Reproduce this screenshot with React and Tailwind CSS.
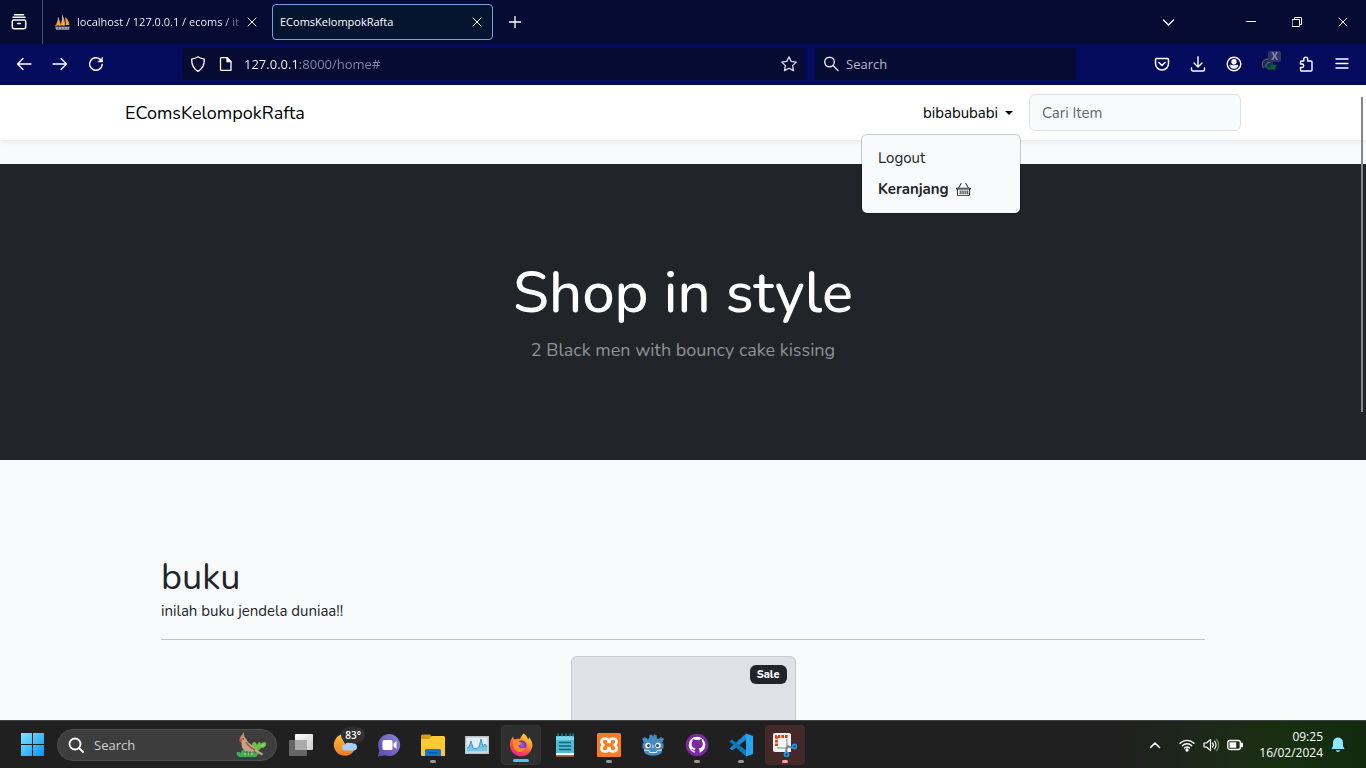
import React from "react";

const UI = "font-['Open_Sans','Noto_Sans',sans-serif]";
const S = { fill: "none", stroke: "currentColor", strokeLinecap: "round", strokeLinejoin: "round" };

function Icon({ size = 16, children, vb = "0 0 16 16", w = 1.3 }) {
  return (
    <svg width={size} height={size} viewBox={vb} {...S} strokeWidth={w} aria-hidden="true" className="shrink-0">
      {children}
    </svg>
  );
}

const Close = ({ size = 10 }) => (
  <Icon size={size} vb="0 0 10 10" w={1}>
    <path d="M1 1l8 8M9 1l-8 8" />
  </Icon>
);

function ToolButton({ label, children }) {
  return (
    <button aria-label={label} className="flex h-8 w-9 shrink-0 items-center justify-center">
      {children}
    </button>
  );
}

function TabBar() {
  return (
    <div className="flex h-11 shrink-0 items-center bg-[#060b33]">
      <button aria-label="View recent browsing" className="flex h-11 w-[43px] shrink-0 items-center justify-center border-r border-[#4b4e6c] pr-1">
        <Icon size={18} vb="0 0 18 18" w={1.5}>
          <path d="M4.500 1.800h9M3 4.300h12M3.800 7h10.400a1.500 1.500 0 0 1 1.500 1.500v5.200a2 2 0 0 1-2 2H4.300a2 2 0 0 1-2-2V8.500A1.500 1.500 0 0 1 3.800 7zM7.500 10.500h3" />
        </Icon>
      </button>
      <div className="ml-[3px] flex h-9 w-[223px] shrink-0 items-center pl-2 pr-3">
        <svg width="17" height="17" viewBox="0 0 17 17" className="shrink-0" aria-hidden="true">
          <path d="M1 12C3 9 4 6 4 3l3 8zM6 11.500C8 8 8.300 4 8 1c2 3 3.500 7 3 10.500zM11.500 11c.6-3 .3-5-.3-8 2.500 2 4.300 5 4.300 8z" fill="#f29222" />
          <path d="M4.300 3.500L5.500 12M8.500 1.500l1 10M11.700 4l1.300 7" stroke="#c9cbd8" strokeWidth=".7" />
          <path d="M1 12.500h15l-.8 3.500H2z" fill="#77798c" />
          <path d="M2 14h13" stroke="#c2c3cc" strokeWidth="1" strokeDasharray="2 1" />
        </svg>
        <span className="ml-1.5 flex-1 overflow-hidden whitespace-nowrap bg-linear-to-r from-white from-85% to-transparent bg-clip-text text-[11px] leading-5 text-transparent">
          localhost / 127.0.0.1 / ecoms / it
        </span>
        <button aria-label="Close localhost tab" className="text-white"><Close /></button>
      </div>
      <div className="ml-[3px] flex h-9 w-[221px] shrink-0 items-center rounded border border-[#7d9fe0] bg-[#06152f] pl-[7px] pr-2.5 text-[11px] leading-5 text-white">
        <span className="flex-1">EComsKelompokRafta</span>
        <button aria-label="Close EComsKelompokRafta tab"><Close /></button>
      </div>
      <button aria-label="New tab" className="flex h-9 w-11 items-center justify-center">
        <Icon size={12} vb="0 0 12 12"><path d="M6 .5v11M.5 6h11" /></Icon>
      </button>
      <div className="flex-1" />
      <button aria-label="List all tabs" className="flex h-9 w-9 items-center justify-center">
        <Icon size={13} vb="0 0 13 13"><path d="M1.500 4l5 5 5-5" /></Icon>
      </button>
      <div className="ml-[42px] flex">
        <button aria-label="Minimize" className="flex h-11 w-[46px] items-center justify-center">
          <Icon size={10} vb="0 0 10 10" w={1}><path d="M0 4.500h10" /></Icon>
        </button>
        <button aria-label="Restore" className="flex h-11 w-[46px] items-center justify-center">
          <Icon size={10} vb="0 0 10 10" w={1}><path d="M.5 2.500h7v7h-7zM2.500 2.500v-2h7v7h-2" strokeLinejoin="miter" /></Icon>
        </button>
        <button aria-label="Close window" className="flex h-11 w-[46px] items-center justify-center"><Close /></button>
      </div>
    </div>
  );
}

function Toolbar() {
  return (
    <div className="flex h-[41px] shrink-0 items-center border-b border-[#020738] bg-[#040a5c] pl-1.5 pr-1.5">
      <ToolButton label="Back"><Icon><path d="M15 8H1.500M7 2.500L1.500 8 7 13.500" /></Icon></ToolButton>
      <ToolButton label="Forward"><Icon><path d="M1 8h13.500M9 2.500L14.500 8 9 13.500" /></Icon></ToolButton>
      <ToolButton label="Reload">
        <Icon w={1.5}><path d="M14.200 8.500a6.300 6.300 0 1 1-2-5.100L14 5" /><path d="M14.500 1.500V6H10z" fill="currentColor" strokeWidth=".5" /></Icon>
      </ToolButton>
      <div className="w-[68px] shrink-0" />
      <div className="flex h-8 flex-1 items-center rounded bg-[#060b33] px-2">
        <Icon><path d="M8 .8c2 1.400 4 2 6.300 2.300C14.500 9 12.500 13 8 15.300 3.500 13 1.500 9 1.700 3.100 4 2.800 6 2.200 8 .8z" /></Icon>
        <span className="ml-3 flex"><Icon><path d="M3.500 1.700h5.500l4 4v8.600H3.500a1 1 0 0 1-1-1V2.700a1 1 0 0 1 1-1z" /><path d="M9 1.700v4h4z" fill="currentColor" /></Icon></span>
        <input
          aria-label="Address"
          defaultValue="127.0.0.1:8000/home#"
          className="ml-2.5 min-w-0 flex-1 bg-linear-to-r from-white from-[56px] to-[#858aa5] to-[56px] bg-clip-text text-[13px] leading-6 text-transparent outline-none"
        />
        <button aria-label="Bookmark this page" className="text-[#d8d9e2]">
          <Icon><path d="M8 .9l2.200 4.500 5 .7-3.600 3.500.9 5L8 12.200l-4.500 2.400.9-5L.8 6.100l5-.7z" /></Icon>
        </button>
      </div>
      <div className="ml-2.5 flex h-8 w-[261px] items-center rounded bg-[#060b33] px-2">
        <span className="flex text-[#e2e3ea]"><Icon w={1.400}><circle cx="6.500" cy="6" r="4.800" /><path d="M10 9.500L15 14.500" /></Icon></span>
        <input aria-label="Search the web" placeholder="Search" className="ml-[7px] min-w-0 flex-1 bg-transparent text-[13px] leading-6 text-white outline-none placeholder:text-[#b6b8c6]" />
      </div>
      <div className="w-[68px] shrink-0" />
      <ToolButton label="Save to Pocket"><Icon w={1.500}><path d="M2.700 2.500h10.600a1.200 1.200 0 0 1 1.200 1.200V7.500a6.500 6.500 0 0 1-13 0V3.700a1.200 1.200 0 0 1 1.200-1.200zM5 6.500l3 3 3-3" /></Icon></ToolButton>
      <ToolButton label="Downloads"><Icon w={1.400}><path d="M8 .8V10.500M4 7l4 4 4-4M1.500 12v1.500a1.500 1.500 0 0 0 1.500 1.500h10a1.500 1.500 0 0 0 1.500-1.500V12" /></Icon></ToolButton>
      <ToolButton label="Account">
        <Icon w={1.400}><circle cx="8" cy="8" r="6.800" /><circle cx="8" cy="5.800" r="2" fill="currentColor" /><path d="M4 9.200h8c0 2-1.500 3.300-4 3.300S4 11.200 4 9.200z" fill="currentColor" strokeWidth=".5" /></Icon>
      </ToolButton>
      <button aria-label="Download manager extension" className="relative flex h-8 w-9 shrink-0 items-center justify-center">
        <svg width="18" height="18" viewBox="0 0 18 18" fill="none" aria-hidden="true">
          <circle cx="7.500" cy="9.500" r="5" fill="#0d2f6c" />
          <path d="M10 5.500A5 5 0 0 0 3 13" stroke="#6a4a48" strokeWidth="1.600" />
          <path d="M9.500 7.300A4 4 0 0 0 5 12" stroke="#5f6638" strokeWidth="1.300" />
          <path d="M5 11.500c1.500 1 3.500 1 5.500-.5L9 9.500l7 .5-3 6-1-2c-2.500 1.500-6 1-7-2.500z" fill="#07602a" />
        </svg>
        <span className="absolute right-[7px] top-[3px] flex h-[11px] w-[13px] items-center justify-center rounded-xs bg-[#2f3364] text-[10px] font-bold text-[#8488b2]">X</span>
      </button>
      <ToolButton label="Extensions">
        <Icon w={1.400}><path d="M5.800 5V3a1.900 1.900 0 0 1 3.800 0v2H13a1 1 0 0 1 1 1v8a1 1 0 0 1-1 1H3.500a1 1 0 0 1-1-1v-2.500H4a1.700 1.700 0 0 0 0-3.500H2.500V6a1 1 0 0 1 1-1z" /></Icon>
      </ToolButton>
      <ToolButton label="Application menu"><Icon w={1.400}><path d="M2 3h12M2 7.500h12M2 12h12" /></Icon></ToolButton>
    </div>
  );
}

function Basket() {
  return (
    <svg width="15" height="15" viewBox="0 0 16 16" fill="currentColor" aria-hidden="true">
      <path d="M5.757 1.071a.5.5 0 0 1 .172.686L3.383 6h9.234L10.070 1.757a.5.5 0 1 1 .858-.514L13.783 6H15.500a.5.5 0 0 1 .5.5v1a.5.5 0 0 1-.5.5H15v5a2 2 0 0 1-2 2H3a2 2 0 0 1-2-2V8H.5a.5.5 0 0 1-.5-.5v-1A.5.5 0 0 1 .5 6h1.717L5.070 1.243a.5.5 0 0 1 .686-.172zM2 8v5a1 1 0 0 0 1 1h10a1 1 0 0 0 1-1V8zM1 7v.2h14V7zM4 9h1v4H4zm2 0h1v4H6zm2 0h1v4H8zm2 0h1v4h-1zm2 0h1v4h-1z" />
    </svg>
  );
}

function Navbar() {
  return (
    <nav className="relative z-10 bg-white shadow-[0_2px_4px_rgba(0,0,0,0.075)]">
      <div className="mx-auto flex h-[55px] max-w-[1140px] items-center px-3">
        <a href="#home" className="text-lg text-black">EComsKelompokRafta</a>
        <div className="relative ml-auto">
          <button aria-expanded="true" className="flex items-center gap-[7px] px-2 py-2 text-[15px] leading-6 text-black">
            bibabubabi
            <svg width="8" height="4" viewBox="0 0 8 4" aria-hidden="true"><path d="M0 0h8L4 4z" /></svg>
          </button>
          <div className="absolute right-0 top-full mt-px w-40 rounded-md border border-black/20 bg-[#f8fafc] bg-clip-padding py-2 text-[15px] leading-[23px] text-[#212529]">
            <a href="#logout" className="block px-4 py-1">Logout</a>
            <a href="#keranjang" className="flex items-center gap-[7px] px-4 py-1 font-bold">Keranjang <Basket /></a>
          </div>
        </div>
        <input aria-label="Cari Item" placeholder="Cari Item" className="ml-2 h-[37px] w-[212px] rounded-md border border-[#dee2e6] bg-[#f8fafc] px-3 text-[15px] outline-none placeholder:text-[#63686d]" />
      </div>
    </nav>
  );
}

function Page() {
  return (
    <main className="relative min-h-0 flex-1 overflow-hidden bg-[#f8fafc] font-['Nunito','Open_Sans',sans-serif] text-[#212529]">
      <Navbar />
      <header className="mt-6 flex h-[296px] flex-col items-center justify-center bg-[#212529] text-center">
        <h1 className="text-[58px] leading-[66px] font-medium text-white">Shop in style</h1>
        <p className="mt-2.5 text-lg leading-7 text-[#909294]">2 Black men with bouncy cake kissing</p>
      </header>
      <section className="mx-auto max-w-[1092px] px-6 pt-24">
        <h2 className="text-4xl leading-11">buku</h2>
        <p className="text-[15px] leading-[22px]">inilah buku jendela duniaa!!</p>
        <hr className="mt-[17px] border-[#bfc2c5]" />
        <article className="mx-auto mt-4 flex h-80 w-[225px] items-start justify-end rounded-md border border-[#c6c9cd] bg-[#dee2e6] p-2">
          <span className="rounded-md bg-[#212529] px-[7px] text-[11px] leading-[19px] font-extrabold text-white">Sale</span>
        </article>
      </section>
      <div className="absolute right-[3px] top-3 z-20 h-[315px] w-0.5 bg-[#85878a]" />
    </main>
  );
}

const art = {
  taskview: (
    <>
      <defs><linearGradient id="tv" x2="1" y2="1"><stop stopColor="#fff" /><stop offset="1" stopColor="#ccc" /></linearGradient></defs>
      <rect x="6" y="1" width="18" height="16" rx="1" fill="url(#tv)" />
      <rect x="0" y="7" width="18" height="16" rx="1" fill="#707070" fillOpacity=".88" />
      <path d="M6 7h12v10H6z" fill="#aaa" />
    </>
  ),
  weather: (
    <>
      <defs><linearGradient id="moon" x2="0" y2="1"><stop stopColor="#ffc044" /><stop offset="1" stopColor="#ee7a1f" /></linearGradient></defs>
      <path d="M10 1C9 9 13 15 22 16A11 11 0 1 1 10 1z" fill="url(#moon)" />
      <path d="M12 17.500a3 3 0 0 1 0-6 5 5 0 0 1 8-1 3.500 3.500 0 0 1 1 7z" fill="#a9cdf5" />
    </>
  ),
  chat: (
    <>
      <defs><linearGradient id="ch" x1="1" x2="0" y2="1"><stop stopColor="#6e96d7" /><stop offset=".45" stopColor="#8062c3" /><stop offset="1" stopColor="#524fb9" /></linearGradient></defs>
      <path d="M12 1a11 11 0 1 1-4 21.200L1 23.500 2.400 17A11 11 0 0 1 12 1z" fill="url(#ch)" />
      <rect x="5.500" y="7" width="10" height="10" rx="1.500" fill="#fff" /><path d="M16.500 10.500L19.500 8v8l-3-2.500z" fill="#fff" />
    </>
  ),
  folder: (
    <>
      <path d="M0 3a1.500 1.500 0 0 1 1.500-1.500H9L12 5v5H0z" fill="#d99b12" />
      <path d="M0 6h8l3-3h11.500A1.500 1.500 0 0 1 24 4.500V23H1a1 1 0 0 1-1-1z" fill="#ffc933" />
      <path d="M4 23v-5.500A1.500 1.500 0 0 1 5.500 16h13a1.500 1.500 0 0 1 1.500 1.500V23z" fill="#0878cf" /><path d="M8 19h8v1.500H8z" fill="#0754a0" />
    </>
  ),
  monitor: (
    <>
      <path d="M0 3h24v18H0z" fill="#b8c1c9" /><path d="M1.500 4.500h21v15h-21z" fill="#e3edf5" />
      <path d="M2 15l2-1 2-6 2 7 3 1 3-2 2-8 2 8 2-3 2 3v4.500H2z" fill="#76c7ed" />
      <path d="M2 15l2-1 2-6 2 7 3 1 3-2 2-8 2 8 2-3 2 3" stroke="#3999d0" fill="none" />
    </>
  ),
  firefox: (
    <>
      <defs>
        <linearGradient id="ff" x1=".8" x2=".2" y2="1"><stop stopColor="#fff13d" /><stop offset=".35" stopColor="#ff9526" /><stop offset=".7" stopColor="#ff4058" /><stop offset="1" stopColor="#e7208f" /></linearGradient>
        <radialGradient id="fp"><stop stopColor="#9a59ff" /><stop offset="1" stopColor="#6b2fbd" /></radialGradient>
      </defs>
      <path d="M14.500.5c3 2 4 4 4.500 6 1-.5 1-1.500 1-2.500 3 4 4 7.500 3 11A11.300 11.300 0 0 1 .8 12C.8 9 2 6 4 3.500L5 6.500c2-.8 4-1 6-.5 1-2 2-4 3.500-5.500z" fill="url(#ff)" />
      <circle cx="12.500" cy="12.500" r="5" fill="url(#fp)" />
      <path d="M4 8c2-1.500 5-1.500 6.500 1L13 10c-.5 1.500-3 1.500-3.500 2.500 0 3 4 4 7 1.500-1 5-6 6-9 4-3-1.500-4-6-3.500-10z" fill="#ff8b29" />
    </>
  ),
  notepad: (
    <>
      <path d="M3 3h18v18H3z" fill="#51bcd3" /><path d="M3 3h18v4H3z" fill="#78d9e8" />
      <path d="M3 20h18v2H3z" fill="#fff" /><path d="M3 22h18v1.800H3z" fill="#aa682d" />
      <path d="M6 9.500h12M6 13h12M6 16.500h12" stroke="#13627a" strokeWidth="1.300" />
      <path d="M5 .5v3M9 .5v3M13 .5v3M17 .5v3M20 .5v3" stroke="#15829c" strokeWidth="1.500" />
    </>
  ),
  xampp: (
    <>
      <rect width="24" height="24" rx="1.500" fill="#fb7a24" />
      <path d="M8.300 5.500C5.500 5.500 4.500 6.800 4.500 8.500S5.500 12 7.500 12c-2 0-3 1.500-3 3.500s1 3 3.800 3 3.200-1.500 3.200-3.500h1c0 2 .4 3.500 3.200 3.500s3.800-1 3.800-3-1-3.500-3-3.500c2 0 3-1.800 3-3.500s-1-3-3.800-3-3.200 1.500-3.200 3.500h-1c0-2-.4-3.500-3.200-3.500z" fill="none" stroke="#fff" strokeWidth="2.600" />
    </>
  ),
  godot: (
    <>
      <path d="M3 10L1 6l3-2 2.500 2L8 5.500 8.500 2 11 1.500 12 4l1-2.500 2.500.5.500 3.500 1.500.5L20 4l3 2-2 4 1.500.5V15L21 16v3c-3 5-15 5-18 0v-3l-1.500-1v-4.500z" fill="#478cbf" />
      <circle cx="7" cy="12.500" r="2.700" fill="#fff" /><circle cx="17" cy="12.500" r="2.700" fill="#fff" />
      <circle cx="7.500" cy="12.500" r="1.500" fill="#414042" /><circle cx="16.500" cy="12.500" r="1.500" fill="#414042" />
      <path d="M12 12v3M3 17l5 .5.500 2h7l.5-2 5-.5" stroke="#dceefa" strokeWidth="1" fill="none" />
    </>
  ),
  github: (
    <>
      <circle cx="12" cy="12" r="11.300" fill="#7b2aa0" />
      <circle cx="12" cy="12" r="8.300" fill="#fff" />
      <path d="M9.800 20.500v-2.800c-2.300.4-3-.8-3.600-1.900 1.300 0 1.800 1.500 3.700 1 .1-.8.400-1.200.7-1.400-2.600-.4-4-1.500-4-4.600 0-1.100.3-1.800.9-2.500-.2-.9-.1-1.600.2-2.300.9 0 1.700.5 2.400 1a9 9 0 0 1 4.200 0c.7-.5 1.500-1 2.400-1 .3.7.4 1.400.2 2.300.6.700.9 1.400.9 2.500 0 3.100-1.400 4.200-4 4.600.4.400.7 1 .7 2v3.100z" fill="#7b2aa0" />
    </>
  ),
  vscode: (
    <>
      <path d="M17 0L3 15l-3-2.500V10l2-1.500L17 20z" fill="#202020" opacity="0" />
      <path d="M17 .5L.5 15.500l2.500 2L18 6z" fill="#1588d2" />
      <path d="M17 23.500L.5 8.500l2.500-2L18 18z" fill="#0878bf" />
      <path d="M17 .5L24 3v18l-7 2.500z" fill="#27a5f2" />
    </>
  ),
  snip: (
    <>
      <path d="M0 2a2 2 0 0 1 2-2h14a2 2 0 0 1 2 2v17H2a2 2 0 0 1-2-2z" fill="#f4f4f4" />
      <path d="M3.500 13V3.500H15" fill="none" stroke="#dc3f12" strokeWidth="3" strokeDasharray="2.600 1" />
      <path d="M14 6v9L4 15" fill="none" stroke="#b5bdc4" strokeWidth="2" /><path d="M14 13l6 2M14 14l-1 5" stroke="#75818a" strokeWidth="2" />
      <circle cx="21.500" cy="13.500" r="2" fill="none" stroke="#159be5" strokeWidth="1.800" /><circle cx="13.500" cy="21.500" r="2" fill="none" stroke="#159be5" strokeWidth="1.800" />
    </>
  ),
};

const apps = [
  { id: "taskview", label: "Task view" },
  { id: "weather", label: "Widgets", badge: "83°" },
  { id: "chat", label: "Chat" },
  { id: "folder", label: "File Explorer", dot: "w-1.5 bg-[#999]" },
  { id: "monitor", label: "Resource Monitor" },
  { id: "firefox", label: "Firefox", box: "bg-[#2f2f2f] border border-[#363636]", dot: "w-4 bg-[#4cc2ff]" },
  { id: "notepad", label: "Notepad" },
  { id: "xampp", label: "XAMPP", dot: "w-1.5 bg-[#999]" },
  { id: "godot", label: "Godot" },
  { id: "github", label: "GitHub Desktop", dot: "w-1.5 bg-[#999]" },
  { id: "vscode", label: "Visual Studio Code", dot: "w-1.5 bg-[#999]" },
  { id: "snip", label: "Snipping Tool", box: "bg-[#472829]", dot: "w-1.5 bg-[#ff99a4]" },
];

function Bird() {
  return (
    <svg width="32" height="26" viewBox="6 4 32 26" aria-hidden="true">
      <path d="M22 17c0-3 3-4 4-2l1 2c1-1 1-3 3-3l1 2c1-2 4-3 5-1 1 3-2 5-5 5l-3 3h-6z" fill="#6fc04a" />
      <path d="M7 24c2 0 3 0 4 1 0-3 3-4 4-2 2-2 5-1 8 1l6 1-3 4H9c-2-1-3-3-2-5z" fill="#45a85a" />
      <path d="M14 26h9M31 18l3-1" stroke="#8be05c" strokeWidth="1.500" />
      <path d="M13.700 4.500L14.500 9c2 1.500 2 3.500 4 5.500 3 2.500 5 4 7 6.500l8 5-2 1.200-7-4c-4 2-10 1-12-3-1.500-3-.5-5-1.500-7.500L9.500 12l1-3z" fill="#c3a488" />
      <path d="M16 14c2 4 5 6 9 8" stroke="#a5503c" strokeWidth="1.500" fill="none" />
      <path d="M13.700 4.500L11 8.500l2.500 1z" fill="#cf7a5d" />
      <path d="M9 11l3-.5.5 2.500-2.500 1.500z" fill="#e8472c" />
      <circle cx="13.200" cy="10.800" r=".7" fill="#2c211c" />
      <path d="M17 23v4M20 23v4" stroke="#694532" />
    </svg>
  );
}

function Taskbar() {
  return (
    <footer className="flex h-12 shrink-0 items-center border-t border-[#444] bg-linear-to-r from-[#202020] from-82% via-[#17300f] via-94% to-[#12290f] text-white">
      <button aria-label="Start" className="ml-[21px] mr-[13px] shrink-0">
        <svg width="23" height="23" viewBox="0 0 23 23" aria-hidden="true" className="block">
          <defs><linearGradient id="win" x2="1" y2="1"><stop stopColor="#7be8ff" /><stop offset="1" stopColor="#0c91f5" /></linearGradient></defs>
          <path d="M0 0h11v11H0zM12 0h11v11H12zM0 12h11v11H0zM12 12h11v11H12z" fill="url(#win)" />
        </svg>
      </button>
      <div className="flex h-8 w-[220px] shrink-0 items-center rounded-full border border-[#505050] bg-[#3d3d3d] pl-2.5 pr-2">
        <Icon w={1.800}><circle cx="7" cy="7" r="5.500" /><path d="M11 11l4 4" /></Icon>
        <input aria-label="Search Windows" placeholder="Search" className="ml-2.5 min-w-0 flex-1 bg-transparent text-[13px] leading-6 outline-none placeholder:text-[#d0d0d0]" />
        <Bird />
      </div>
      <div className="ml-0.5 flex shrink-0">
        {apps.map((a) => (
          <div key={a.id} className="flex w-11 justify-center">
            <button aria-label={a.label} className={`relative flex h-10 w-10 items-center justify-center rounded ${a.box || ""}`}>
              <svg width="24" height="24" viewBox="0 0 24 24" aria-hidden="true">{art[a.id]}</svg>
              {a.badge && <span className="absolute right-0 top-0.5 rounded-full bg-[#303030] px-1 text-[10px] leading-4 font-semibold">{a.badge}</span>}
              {a.dot && <span className={`absolute bottom-0.5 left-1/2 h-[3px] -translate-x-1/2 rounded-full ${a.dot}`} />}
            </button>
          </div>
        ))}
      </div>
      <div className="flex-1" />
      <button aria-label="Show hidden icons" className="mr-[18px]"><Icon size={12} vb="0 0 12 12" w={1.600}><path d="M1.500 8.500L6 4l4.500 4.500" /></Icon></button>
      <button aria-label="Network, volume and battery" className="mr-4 flex items-center gap-2">
        <Icon w={1.400}><path d="M1 6.200a10 10 0 0 1 14 0M3.300 8.700a6.700 6.700 0 0 1 9.400 0M5.500 11a3.500 3.500 0 0 1 5 0" /><circle cx="8" cy="13" r="1" fill="currentColor" /></Icon>
        <Icon w={1.200}><path d="M1 6v4h2.500L7.500 13.500v-11L3.500 6zM9.500 6a3 3 0 0 1 0 4M11.500 4.200a5.500 5.500 0 0 1 0 7.600" /><path d="M13.500 2.500a8 8 0 0 1 0 11" opacity=".4" /></Icon>
        <Icon w={1.300}><rect x=".8" y="3.500" width="12.500" height="9" rx="2" /><path d="M3 5.500h6v5H3z" fill="currentColor" strokeWidth=".5" /><path d="M15 6.500v3" strokeWidth="2" /></Icon>
      </button>
      <div className="text-right text-xs leading-4">
        <div>09:25</div>
        <div>16/02/2024</div>
      </div>
      <button aria-label="Notifications" className="ml-2 mr-[21px]">
        <svg width="14" height="16" viewBox="0 0 14 16" fill="#91e6ff" aria-hidden="true"><path d="M7 .5a5 5 0 0 1 5 5V9l1.500 3H.5L2 9V5.500a5 5 0 0 1 5-5zM4.800 13.300h4.400a2.300 2.300 0 0 1-4.400 0z" /></svg>
      </button>
    </footer>
  );
}

export default function App() {
  return (
    <div className={`flex h-screen flex-col overflow-hidden ${UI}`}>
      <div className="shrink-0 text-white">
        <TabBar />
        <Toolbar />
      </div>
      <Page />
      <Taskbar />
    </div>
  );
}
